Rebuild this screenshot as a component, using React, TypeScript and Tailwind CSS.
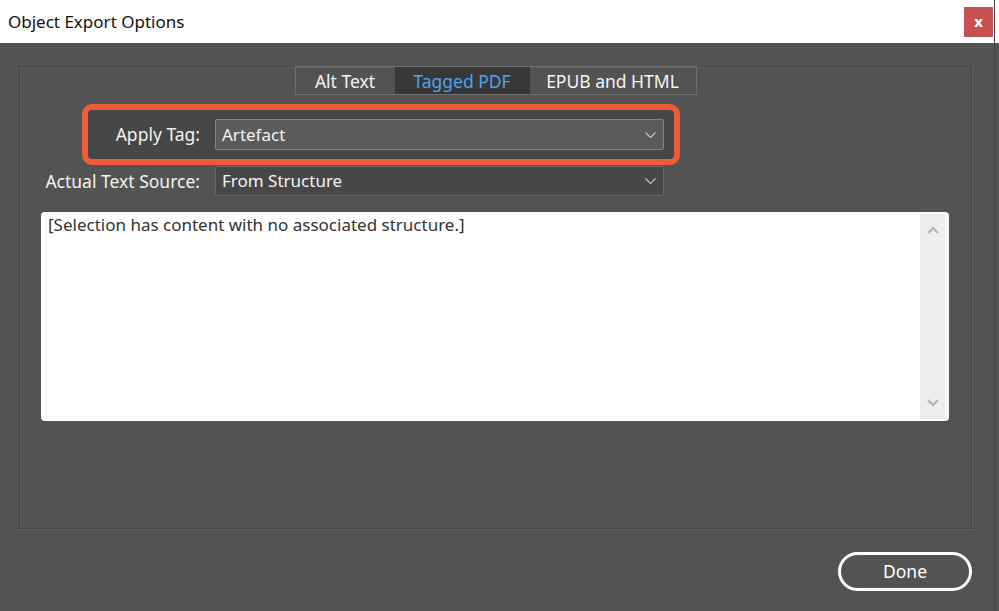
import React from "react";

function Chevron({ className }: { className?: string }) {
  return (
    <svg className={className} width="11" height="6" viewBox="0 0 11 6" fill="none" stroke="currentColor" strokeWidth={1.1}>
      <path d="M0.5 0.5l5 5 5-5" />
    </svg>
  );
}

function Select({ value, focused }: { value: string; focused?: boolean }) {
  return (
    <div
      className={
        focused
          ? "flex h-[31px] w-[449px] items-center justify-between rounded-[2px] border border-[#4a90e2] bg-[#5b5b5b] pl-[6px] pr-[7px]"
          : "flex h-[30px] w-[449px] items-center justify-between rounded-[2px] border border-[#696969] bg-[#474747] pl-[6px] pr-[7px]"
      }
    >
      <span className="text-[17px] text-[#f2f2f2]">{value}</span>
      <Chevron className="text-[#c8c8c8]" />
    </div>
  );
}

export default function App() {
  const tabs = [
    { label: "Alt Text", w: "w-[99px]", active: false },
    { label: "Tagged PDF", w: "w-[135px]", active: true },
    { label: "EPUB and HTML", w: "w-[166px]", active: false },
  ];

  return (
    <div
      className="relative flex h-[611px] w-[999px] flex-col overflow-hidden bg-[#535353]"
      style={{ fontFamily: '"Noto Sans", "Liberation Sans", sans-serif' }}
    >
      <header className="flex h-[43px] items-center justify-between bg-white pl-[8px] pr-[6px]">
        <h1 className="text-[17px] text-[#111]">Object Export Options</h1>
        <button className="flex h-[30px] w-[29px] items-center justify-center bg-[#c75050] text-[15px] font-bold leading-none text-white">
          x
        </button>
      </header>

      <main className="flex flex-1 flex-col px-[19px] pt-[23px]">
        <section className="flex h-[463px] w-[953px] flex-col border border-[#444444] px-[21px] shadow-[1px_1px_0_#5f5f5f,inset_1px_1px_0_#5d5d5d]">
          <div className="-mt-px flex justify-center">
            <div className="flex h-[29px] border border-[#6e6e6e]">
              {tabs.map((t) => (
                <div
                  key={t.label}
                  className={
                    t.active
                      ? `${t.w} flex items-center justify-center bg-[#383838] pt-[2px] text-[17.5px] text-[#4da3f0]`
                      : `${t.w} flex items-center justify-center pt-[2px] text-[17.5px] text-[#f4f4f4]`
                  }
                >
                  {t.label}
                </div>
              ))}
            </div>
          </div>

          <div className="ml-[41px] mt-[9px] flex h-[61px] w-[598px] items-center rounded-[10px] border-[6px] border-[#f05b38] bg-[#474747]">
            <span className="w-[112px] text-right text-[17.5px] text-[#f2f2f2]">Apply Tag:</span>
            <div className="ml-[15px]">
              <Select value="Artefact" focused />
            </div>
          </div>

          <div className="mt-px flex items-center">
            <span className="w-[159px] text-right text-[17.5px] text-[#f2f2f2]">Actual Text Source:</span>
            <div className="ml-[15px]">
              <Select value="From Structure" />
            </div>
          </div>

          <div className="mt-[16px] flex h-[209px] w-[908px] rounded-[4px] bg-white py-[2px] pl-[7px] pr-[4px]">
            <p className="flex-1 text-[17px] leading-[22px] text-[#333]">
              [Selection has content with no associated structure.]
            </p>
            <div className="flex w-[25px] flex-col items-center justify-between bg-[#ededed] py-[12px]">
              <svg width="12" height="8" viewBox="0 0 12 8" fill="none" stroke="#b5b5b5" strokeWidth={2.2}>
                <path d="M1 7l5-5 5 5" />
              </svg>
              <svg width="12" height="8" viewBox="0 0 12 8" fill="none" stroke="#b5b5b5" strokeWidth={2.2}>
                <path d="M1 1l5 5 5-5" />
              </svg>
            </div>
          </div>
        </section>

        <div className="mt-[23px] flex w-[953px] justify-end">
          <button className="h-[39px] w-[134px] rounded-full border-[3px] border-white text-[17.5px] text-white">
            Done
          </button>
        </div>
      </main>

      <div className="absolute right-[4px] top-0 h-full w-px bg-[#464646]" />
    </div>
  );
}
